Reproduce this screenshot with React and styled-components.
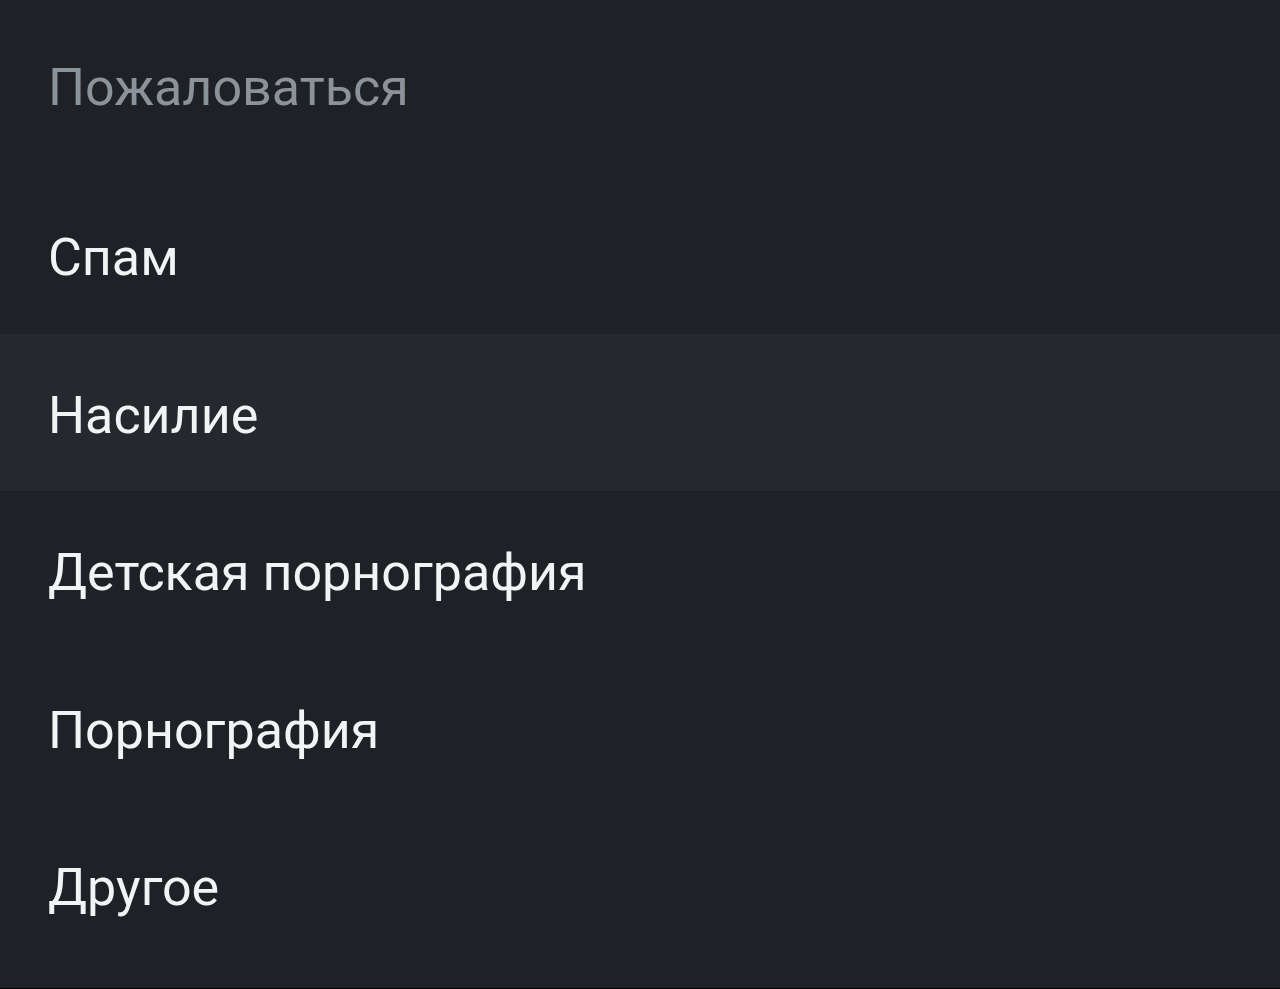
import React from 'react';
import styled, { createGlobalStyle } from 'styled-components';

const GlobalStyle = createGlobalStyle`
  html, body {
    margin: 0;
    padding: 0;
    background: #000;
  }
  body {
    font-family: Roboto, "Liberation Sans", sans-serif;
  }
`;

const Sheet = styled.div`
  display: flex;
  flex-direction: column;
  height: 988px;
  background: #1e2125;
  overflow: hidden;
`;

const Title = styled.div`
  display: flex;
  align-items: center;
  height: 176px;
  flex-shrink: 0;
  padding: 0 0 2px 48px;
  box-sizing: border-box;
  font-size: 52px;
  color: #8b929a;
`;

const Option = styled.div`
  display: flex;
  align-items: center;
  height: 157.5px;
  flex-shrink: 0;
  box-sizing: border-box;
  padding: 6px 0 0 48px;
  font-size: 52px;
  color: #f2f3f4;
  background: ${(p) => (p.$active ? '#25282c' : 'transparent')};
  cursor: pointer;
`;

const reasons = ['Спам', 'Насилие', 'Детская порнография', 'Порнография', 'Другое'];

export default function App() {
  return (
    <>
      <GlobalStyle />
      <Sheet>
        <Title>Пожаловаться</Title>
        {reasons.map((r, i) => (
          <Option key={r} $active={i === 1}>
            {r}
          </Option>
        ))}
      </Sheet>
    </>
  );
}
